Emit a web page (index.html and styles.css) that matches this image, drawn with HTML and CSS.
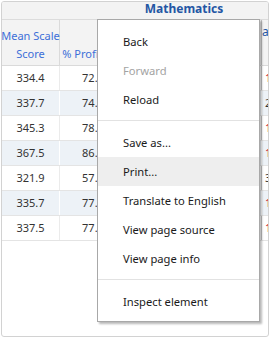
FILE: index.html
```html
<!DOCTYPE html>
<html>
<head>
<meta charset="utf-8">
<link rel="stylesheet" href="styles.css">
</head>
<body>
<div class="frame">
  <div class="table">
    <div class="row top">
      <div class="tcell"></div>
      <div class="tcell group">Mathematics</div>
      <div class="tcell"></div>
    </div>
    <div class="row head">
      <div class="cell hc">Mean Scale<br>Score</div>
      <div class="cell hc">% Proficient</div>
      <div class="cell hc"></div>
      <div class="cell hc side">ac</div>
    </div>
    <div class="row"><div class="cell">334.4</div><div class="cell">72.4</div><div class="cell"></div><div class="cell side red">1.2</div></div>
    <div class="row alt"><div class="cell">337.7</div><div class="cell">74.1</div><div class="cell"></div><div class="cell side">2.0</div></div>
    <div class="row"><div class="cell">345.3</div><div class="cell">78.6</div><div class="cell"></div><div class="cell side red">1.5</div></div>
    <div class="row alt"><div class="cell">367.5</div><div class="cell">86.2</div><div class="cell"></div><div class="cell side red">1.1</div></div>
    <div class="row"><div class="cell">321.9</div><div class="cell">57.9</div><div class="cell"></div><div class="cell side">3.4</div></div>
    <div class="row alt"><div class="cell">335.7</div><div class="cell">77.3</div><div class="cell"></div><div class="cell side red">1.7</div></div>
    <div class="row"><div class="cell">337.5</div><div class="cell">77.8</div><div class="cell"></div><div class="cell side red">1.9</div></div>
  </div>

  <div class="menu">
    <div class="item">Back</div>
    <div class="item disabled">Forward</div>
    <div class="item">Reload</div>
    <div class="sep"></div>
    <div class="item">Save as...</div>
    <div class="item hover">Print...</div>
    <div class="item">Translate to English</div>
    <div class="item">View page source</div>
    <div class="item">View page info</div>
    <div class="sep"></div>
    <div class="item">Inspect element</div>
  </div>
</div>
</body>
</html>
```

FILE: styles.css
```css
html, body {
  margin: 0;
  padding: 0;
  background: #ffffff;
}

.frame {
  position: relative;
  margin: 1px 0 0 1px;
  width: 266px;
  height: 334px;
  border: 1px solid #d2d2d2;
  border-radius: 3px;
  overflow: hidden;
  background: #ffffff;
  font-family: "Noto Sans", "Liberation Sans", sans-serif;
}

.table {
  display: flex;
  flex-direction: column;
  width: 330px;
}

.row {
  display: grid;
  grid-template-columns: 58px 67px 135px 70px;
  height: 24px;
  border-bottom: 1px solid #e4e4e4;
}

.row.alt {
  background: #edf2f7;
}

.row.top {
  grid-template-columns: 104px 156px 70px;
  height: 17px;
  background: #f3f3f3;
  border-bottom: 1px solid #dcdcdc;
}

.row.head {
  height: 45px;
  background: #f3f3f3;
  border-bottom: 1px solid #dadada;
}

.tcell {
  font-size: 12px;
  line-height: 14px;
  text-align: center;
}

.group {
  font-weight: bold;
  color: #2456a4;
}

.cell {
  box-sizing: border-box;
  border-right: 1px solid #ebebeb;
  font-size: 11px;
  line-height: 24px;
  color: #333333;
  text-align: center;
  white-space: nowrap;
  overflow: hidden;
}

.row.alt .cell {
  border-right-color: #ffffff;
}

.cell.hc {
  color: #3d6fd8;
  line-height: 18px;
  overflow: visible;
  display: flex;
  align-items: flex-end;
  justify-content: center;
  text-align: center;
  padding-bottom: 2px;
  border-right-color: #dadada;
}

.cell:nth-child(3) {
  border-right-color: #c4c4c4;
}

.cell.side {
  text-align: left;
  padding-left: 3px;
}

.cell.hc.side {
  align-items: flex-start;
  justify-content: flex-start;
  padding: 3px 0 0 0;
  color: #2456a4;
  font-size: 12px;
}

.cell.red {
  color: #c8102e;
}

.menu {
  position: absolute;
  left: 95px;
  top: 17px;
  width: 161px;
  padding: 7px 0 5px 0;
  background: #ffffff;
  border: 1px solid #a8a8a8;
  box-shadow: 2px 2px 2px rgba(0, 0, 0, 0.28);
  font-size: 11.2px;
  color: #1a1a1a;
}

.item {
  height: 29px;
  line-height: 29px;
  padding-left: 25px;
  white-space: nowrap;
}

.item.disabled {
  color: #a3a3a3;
}

.item.hover {
  background: #eeeeee;
}

.sep {
  height: 1px;
  margin: 6px 0 7px 0;
  background: #e2e2e2;
}
```
